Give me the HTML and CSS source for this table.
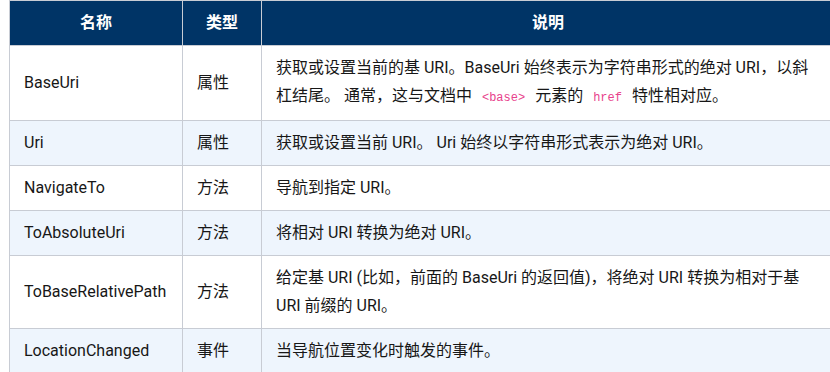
FILE: index.html
```html
<!DOCTYPE html>
<html lang="zh-CN">
<head>
<meta charset="utf-8">
<link rel="stylesheet" href="styles.css">
</head>
<body>
<div class="wrap">
<table class="api">
  <colgroup>
    <col class="c1"><col class="c2"><col class="c3">
  </colgroup>
  <thead>
    <tr><th>名称</th><th>类型</th><th>说明</th></tr>
  </thead>
  <tbody>
    <tr><td>BaseUri</td><td>属性</td><td>获取或设置当前的基 URI。BaseUri 始终表示为字符串形式的绝对 URI，以斜杠结尾。 通常，这与文档中 <code>&lt;base&gt;</code> 元素的 <code>href</code> 特性相对应。</td></tr>
    <tr><td>Uri</td><td>属性</td><td>获取或设置当前 URI。 Uri 始终以字符串形式表示为绝对 URI。</td></tr>
    <tr><td>NavigateTo</td><td>方法</td><td>导航到指定 URI。</td></tr>
    <tr><td>ToAbsoluteUri</td><td>方法</td><td>将相对 URI 转换为绝对 URI。</td></tr>
    <tr><td>ToBaseRelativePath</td><td>方法</td><td>给定基 URI (比如，前面的 BaseUri 的返回值)，将绝对 URI 转换为相对于基 URI 前缀的 URI。</td></tr>
    <tr><td>LocationChanged</td><td>事件</td><td>当导航位置变化时触发的事件。</td></tr>
  </tbody>
</table>
</div>
</body>
</html>
```
FILE: styles.css
```css
html, body {
  margin: 0;
  padding: 0;
  overflow: hidden;
  background: #ffffff;
}
.wrap {
  padding-left: 9px;
  width: 900px;
}
.api {
  border-collapse: collapse;
  table-layout: fixed;
  width: 825px;
  font-family: Roboto, "Noto Sans CJK SC", sans-serif;
  font-size: 16px;
  color: #171717;
  line-height: 28px;
}
.c1 { width: 173px; }
.c2 { width: 79px; }
.c3 { width: 573px; }
.api th, .api td {
  border: 1px solid #c8ccd4;
  padding: 8px 14px;
  text-align: left;
  vertical-align: middle;
}
.api th {
  background: #003466;
  color: #ffffff;
  font-weight: 700;
  text-align: center;
}
.api tbody tr:nth-child(even) td {
  background: #eef5fd;
}
.api code {
  font-family: "Liberation Mono", monospace;
  font-size: 12px;
  color: #e8428c;
  padding: 0 6px;
}
```
